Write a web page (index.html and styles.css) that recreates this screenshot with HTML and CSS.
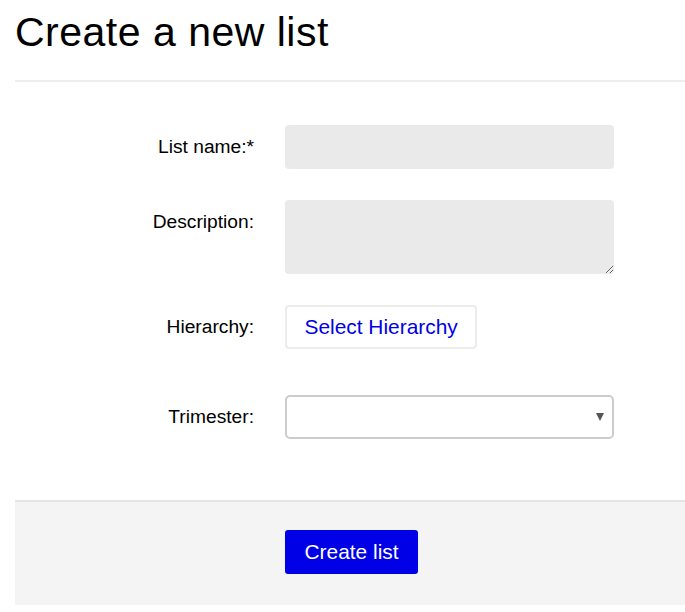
FILE: index.html
```html
<!DOCTYPE html>
<html lang="en">
<head>
<meta charset="utf-8">
<title>Create a new list</title>
<link rel="stylesheet" href="styles.css">
</head>
<body>
<div class="page">
  <h1 class="title">Create a new list</h1>
  <hr class="divider">
  <form class="form">
    <div class="fields">
      <div class="field">
        <label class="label" for="name">List name:*</label>
        <input class="input" id="name" type="text">
      </div>
      <div class="field">
        <label class="label" for="desc">Description:</label>
        <textarea class="textarea" id="desc"></textarea>
      </div>
      <div class="field">
        <span class="label">Hierarchy:</span>
        <button type="button" class="btn-outline">Select Hierarchy</button>
      </div>
      <div class="field field--spaced">
        <label class="label" for="trim">Trimester:</label>
        <span class="select-wrap">
          <select class="select" id="trim"><option></option></select>
        </span>
      </div>
    </div>
    <div class="footer">
      <button type="submit" class="btn-primary">Create list</button>
    </div>
  </form>
</div>
</body>
</html>
```
FILE: styles.css
```css
html, body {
  margin: 0;
  padding: 0;
  background: #ffffff;
}
body {
  font-family: "Liberation Sans", Arial, sans-serif;
  color: #000;
}
.page {
  padding-left: 15px;
}
.title {
  margin: 9px 0 0 0;
  font-size: 41px;
  letter-spacing: 0.5px;
  line-height: 46px;
  font-weight: normal;
}
.divider {
  margin: 25px 0 0 0;
  border: 0;
  height: 2px;
  background: #eeeeee;
}
.form {
  margin: 0;
}
.fields {
  padding-top: 43px;
  padding-bottom: 61px;
}
.field {
  display: flex;
  align-items: flex-start;
  gap: 31px;
  margin-bottom: 31px;
}
.field:last-child {
  margin-bottom: 0;
}
.field--spaced {
  margin-top: 46px;
}
.field:nth-child(3) {
  margin-bottom: 0;
}
.label {
  width: 239px;
  flex: none;
  text-align: right;
  font-size: 19.2px;
  line-height: 44px;
}
.input {
  width: 329px;
  height: 44px;
  box-sizing: border-box;
  border: 0;
  border-radius: 4px;
  background: #eaeaea;
  margin: 0;
  padding: 0 12px;
  font: inherit;
}
.textarea {
  display: block;
  width: 329px;
  height: 74px;
  box-sizing: border-box;
  border: 0;
  border-radius: 4px;
  background: #eaeaea;
  margin: 0;
  padding: 8px 12px;
  font: inherit;
  resize: both;
}
.btn-outline {
  height: 44px;
  box-sizing: border-box;
  margin: 0;
  padding: 0 17.5px;
  border: 2px solid #ececec;
  border-radius: 4px;
  background: #ffffff;
  color: #0000e6;
  font-family: "Liberation Sans", Arial, sans-serif;
  font-size: 20.9px;
  line-height: 40px;
  cursor: pointer;
}
.select-wrap {
  position: relative;
  display: block;
  width: 329px;
  height: 44px;
}
.select {
  appearance: none;
  -webkit-appearance: none;
  display: block;
  width: 329px;
  height: 44px;
  box-sizing: border-box;
  margin: 0;
  border: 2px solid #cccccc;
  border-radius: 5px;
  background: #ffffff;
  font: inherit;
  padding: 0 12px;
}
.select-wrap::after {
  content: "";
  position: absolute;
  right: 10px;
  top: 18px;
  width: 0;
  height: 0;
  border-left: 4.5px solid transparent;
  border-right: 4.5px solid transparent;
  border-top: 8px solid #555555;
  pointer-events: none;
}
.footer {
  border-top: 2px solid #e5e5e5;
  background: #f4f4f4;
  padding: 28px 0 31px 270px;
}
.btn-primary {
  display: block;
  height: 44px;
  margin: 0;
  padding: 0 19.5px;
  border: 0;
  border-radius: 3px;
  background: #0000e6;
  color: #ffffff;
  font-family: "Liberation Sans", Arial, sans-serif;
  font-size: 20.9px;
  line-height: 44px;
  cursor: pointer;
}
```
